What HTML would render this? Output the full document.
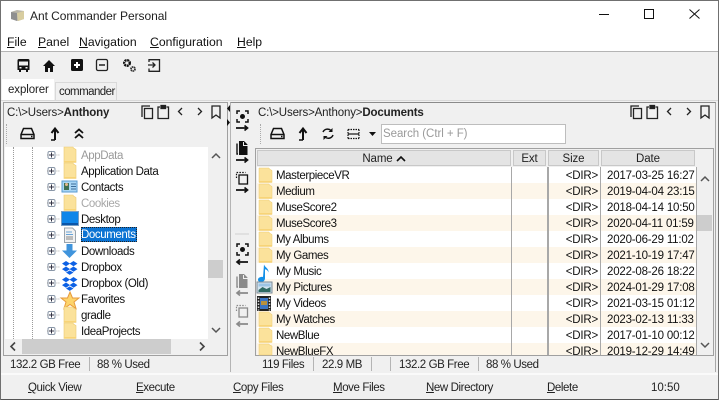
<!DOCTYPE html>
<html><head><meta charset="utf-8"><style>
html,body{margin:0;padding:0;width:719px;height:400px;overflow:hidden;background:#f0f0f0}
body{font:11.5px "Liberation Sans",sans-serif;letter-spacing:-.4px;color:#111;position:relative}
.a,.t{position:absolute}
.t{white-space:nowrap;line-height:18px}
u{text-decoration:underline}
.row{position:absolute;left:257px;width:439px;height:16px}
.c{position:absolute;top:0;line-height:18px;white-space:nowrap}
.d{letter-spacing:-.2px}
.h{position:absolute;top:150px;height:16px;background:#e4e4e4;border:1px solid #c8c8c8;box-sizing:border-box;text-align:center;line-height:16px;color:#222;letter-spacing:-.1px}
.vl{position:absolute;top:167px;height:188px;width:1px;background:#a8a8a8}
.p{letter-spacing:-.15px}
svg{position:absolute;overflow:visible}
</style></head><body>
<!-- window -->
<div class="a" style="left:0;top:0;width:719px;height:51px;background:#fff"></div>
<div class="a" style="left:0;top:51px;width:719px;height:1px;background:#b4b4b4"></div>
<div class="a" style="left:0;top:0;width:719px;height:1px;background:#707070"></div>
<svg style="left:10px;top:9px" width="15" height="13" viewBox="0 0 15 13"><path d="M1 3l6-2 7 1v8l-6 2-7-2z" fill="#b9b5a8"/><path d="M7 4l7-2v8l-6 2z" fill="#d8cda0"/><path d="M1 3l6 1v8l-6-2z" fill="#8f8f8f"/></svg>
<div class="t" style="left:30px;top:7px;font-size:12px;letter-spacing:-.05px;color:#222">Ant Commander Personal</div>
<svg style="left:599px;top:9px" width="110" height="14" fill="none" stroke="#111"><path d="M0 5.500H10" /><rect x="45.500" y=".5" width="9" height="9"/><path d="M90.500 .5l10 9M100.500 .5l-10 9"/></svg>
<div class="t" style="left:7px;top:33px;font-size:12.200px;letter-spacing:0"><u>F</u>ile</div>
<div class="t" style="left:38px;top:33px;font-size:12.200px;letter-spacing:0"><u>P</u>anel</div>
<div class="t" style="left:79px;top:33px;font-size:12.200px;letter-spacing:0"><u>N</u>avigation</div>
<div class="t" style="left:150px;top:33px;font-size:12.200px;letter-spacing:0"><u>C</u>onfiguration</div>
<div class="t" style="left:237px;top:33px;font-size:12.200px;letter-spacing:0"><u>H</u>elp</div>
<!-- toolbar -->
<svg style="left:17px;top:59px" width="150" height="14">
<path d="M2 0h9a1.500 1.500 0 0 1 1.500 1.500V11h-1.500v2H9v-2H4v2H2v-2H.5V1.500A1.500 1.500 0 0 1 2 0z" fill="#111"/><rect x="2" y="2.500" width="9" height="4" fill="#f0f0f0"/><rect x="2.500" y="8" width="2" height="1.500" fill="#f0f0f0"/><rect x="8.500" y="8" width="2" height="1.500" fill="#f0f0f0"/>
<path d="M26 7l6-6 6 6h-2v6h-3v-4h-2v4h-3V7z" fill="#111"/>
<rect x="54" y="0" width="12" height="12" rx="1.500" fill="#111"/><path d="M60 3v6M57 6h6" stroke="#fff" stroke-width="2"/>
<rect x="79.500" y=".5" width="11" height="11" rx="1.500" fill="none" stroke="#222" stroke-width="1.300"/><path d="M82 6h6" stroke="#222" stroke-width="1.500"/>
<circle cx="110" cy="4" r="2.800" fill="none" stroke="#111" stroke-width="2.400" stroke-dasharray="2 .6"/><circle cx="116" cy="10" r="2" fill="none" stroke="#333" stroke-width="1.800" stroke-dasharray="1.500 .5"/>
<path d="M132 3V.7h10.500v11.600H132V9.500" fill="none" stroke="#222" stroke-width="1.300"/><path d="M131 6h7M135.500 3.500L138 6l-2.500 2.500" fill="none" stroke="#222" stroke-width="1.300"/>
</svg>
<!-- tabs -->
<div class="a" style="left:55px;top:82px;width:62px;height:18px;background:#f0f0f0;border:1px solid #d9d9d9;border-bottom:0;box-sizing:border-box"></div>
<div class="a" style="left:2px;top:79px;width:52px;height:21px;background:#fff"></div>
<div class="t" style="left:8px;top:81px;color:#222;letter-spacing:-.1px">explorer</div>
<div class="t" style="left:59px;top:83px;color:#222;letter-spacing:-.55px">commander</div>
<div class="a" style="left:0;top:100px;width:719px;height:1px;background:#d8d8d8"></div>
<!-- left panel -->
<div class="a" style="left:3px;top:102px;width:223px;height:252px;border:1px solid #a0a0a0"></div>
<div class="t p" style="left:7px;top:104px;color:#222">C:\&gt;Users&gt;<b>Anthony</b></div>
<svg style="left:141px;top:105px" width="85" height="16" fill="none" stroke="#222" stroke-width="1.300">
<path d="M1 12V1h8"/><rect x="3.500" y="3.500" width="8" height="10"/>
<path d="M19 2h-2v11.500h10.500V2h-2"/><rect x="20" y=".5" width="4.500" height="3" fill="#222"/>
<path d="M41 3l-3.500 3.500L41 10M57 3l3.500 3.500L57 10"/>
<path d="M71 1h8v12l-4-3-4 3z"/>
</svg>
<div class="a" style="left:6px;top:124px;width:1px;height:20px;border-left:1px dotted #aaa"></div>
<svg style="left:20px;top:127px" width="70" height="14" fill="none" stroke="#111" stroke-width="1.500">
<path d="M1 7.500L3.500 1.500h8L14 7.500v4H1z"/><path d="M1 7.500h13"/><path d="M11 9.500h1.500"/>
<path d="M35 13V2.500M31.500 6L35 1.500 38.500 6" stroke-width="2"/><path d="M31 13h4" stroke-width="1.500"/>
<path d="M55 6l4-3.500L63 6M55 11l4-3.500L63 11" stroke-width="1.800"/>
</svg>
<!-- tree -->
<div class="a" style="left:5px;top:147px;width:203px;height:192px;background:#fff"></div>
<div class="a" style="left:13px;top:147px;height:192px;border-left:1px dotted #9a9a9a"></div>
<div class="a" style="left:32px;top:147px;height:192px;border-left:1px dotted #9a9a9a"></div>
<svg style="left:47px;top:147px" width="14" height="192">
<defs><g id="e"><rect x="1" y="1" width="7" height="7" rx="1.500" fill="none" stroke="#8a97a8"/><path d="M2 4.500h5M4.500 2v5" stroke="#334"/><path d="M0 4.500h1M9.500 4.500h.8M11.500 4.500h.8" stroke="#999"/></g></defs>
<use href="#e" y="3.500"/><use href="#e" y="19.500"/><use href="#e" y="35.500"/><use href="#e" y="51.500"/><use href="#e" y="67.500"/><use href="#e" y="83.500"/><use href="#e" y="99.500"/><use href="#e" y="115.500"/><use href="#e" y="131.500"/><use href="#e" y="147.500"/><use href="#e" y="163.500"/><use href="#e" y="179.500"/>
</svg>
<svg style="left:60px;top:147px" width="20" height="192">
<defs><g id="f"><path d="M4 0h9l.5 1 2.500 1.500V15.500H4z" fill="#fbe29b" stroke="#ecca70" stroke-width=".6"/><path d="M4 14h12v1.500H4z" fill="#f8d477"/></g></defs>
<use href="#f" y="0"/><use href="#f" y="16"/>
<rect x="2" y="34" width="15" height="11" fill="#a9d6f5" stroke="#5a9bd0"/><rect x="4" y="36" width="5" height="7" fill="#3f6e52"/><circle cx="6.500" cy="37.500" r="1.500" fill="#e7b98f"/><path d="M11 37h5M11 39.500h5M11 42h5" stroke="#3c6c99"/>
<use href="#f" y="48"/>
<rect x="2" y="65" width="16" height="13" fill="#0f86e9"/><rect x="2" y="76" width="16" height="2" fill="#0a55a8"/><rect x="1.500" y="64.500" width="17" height="14" fill="none" stroke="#1b5e9e" stroke-width=".6"/>
<path d="M4.500 81h8l3 3v11.500h-11z" fill="#f1f1f1" stroke="#9aa4ad"/><path d="M6 85h6M6 87.500h7" stroke="#66a3d8"/><path d="M6 90h7M6 92h7" stroke="#888"/>
<path d="M6.500 97h6v6.500H17L9.500 111 2 103.500h4.500z" fill="#3f94dc"/>
<g fill="#0d61e5" id="db"><path d="M6 114l-4 2.600 4 2.600 4-2.600zM13.500 114l-4 2.600 4 2.600 4-2.600zM6 119.500l-4 2.600 4 2.600 4-2.600zM13.500 119.500l-4 2.600 4 2.600 4-2.600zM9.700 123.500l-3.700 2 3.700 2.400 3.800-2.400z"/></g>
<use href="#db" y="16"/>
<path d="M10 145l2.500 6h6.500l-5 4 2 6.500-6-4-6 4 2-6.500-5-4h6.500z" fill="#fdd46b" stroke="#e79a3c"/>
<use href="#f" y="160" x="0"/><use href="#f" y="176"/>
</svg>
<div class="t" style="left:81px;top:147px;color:#9a9a9a">AppData</div>
<div class="t" style="left:81px;top:163px">Application Data</div>
<div class="t" style="left:81px;top:179px">Contacts</div>
<div class="t" style="left:81px;top:195px;color:#a8a8a8">Cookies</div>
<div class="t" style="left:81px;top:211px">Desktop</div>
<div class="a" style="left:81px;top:227px;width:56px;height:15px;background:#0b73d3;outline:1px dotted #222;outline-offset:-1px"></div>
<div class="t" style="left:81px;top:226px;color:#fff">Documents</div>
<div class="t" style="left:81px;top:243px">Downloads</div>
<div class="t" style="left:81px;top:259px">Dropbox</div>
<div class="t" style="left:81px;top:275px">Dropbox (Old)</div>
<div class="t" style="left:81px;top:291px">Favorites</div>
<div class="t" style="left:81px;top:307px">gradle</div>
<div class="t" style="left:81px;top:323px">IdeaProjects</div>
<!-- left scrollbars -->
<div class="a" style="left:208px;top:260px;width:15px;height:18px;background:#cdcdcd"></div>
<svg style="left:210px;top:150px" width="12" height="185" fill="none" stroke="#555" stroke-width="1.500"><path d="M2 8l4-4 4 4M2 178l4 4 4-4"/></svg>
<div class="a" style="left:22px;top:339px;width:149px;height:15px;background:#cdcdcd"></div>
<svg style="left:9px;top:340px" width="198" height="13" fill="none" stroke="#444" stroke-width="1.600"><path d="M6 2.500L2 6.500l4 4M191 2.500l4 4-4 4"/></svg>
<div class="t" style="left:10px;top:356px;color:#222">132.2 GB Free</div>
<div class="a" style="left:89px;top:357px;width:1px;height:14px;background:#b4b4b4"></div>
<div class="t" style="left:97px;top:356px;color:#222">88 % Used</div>
<!-- splitter marks -->
<svg style="left:227px;top:105px" width="3" height="30"><path d="M3 0v7L0 3.500zM0 14v7l3-3.500z" fill="#111"/></svg>
<!-- right panel -->
<div class="a" style="left:230px;top:102px;width:486px;height:270px;border-top:1px solid #8a8a8a;border-left:1px solid #b4b4b4;border-right:1px solid #a8a8a8;box-sizing:border-box"></div>
<div class="t p" style="left:258px;top:104px;color:#222">C:\&gt;Users&gt;Anthony&gt;<b>Documents</b></div>
<svg style="left:630px;top:105px" width="85" height="16" fill="none" stroke="#222" stroke-width="1.300">
<path d="M1 12V1h8"/><rect x="3.500" y="3.500" width="8" height="10"/>
<path d="M19 2h-2v11.500h10.500V2h-2"/><rect x="20" y=".5" width="4.500" height="3" fill="#222"/>
<path d="M41 3l-3.500 3.500L41 10M57 3l3.500 3.500L57 10"/>
<path d="M71 1h8v12l-4-3-4 3z"/>
</svg>
<!-- side buttons -->
<svg style="left:235px;top:109px" width="16" height="220" fill="none" stroke="#111" stroke-width="1.400">
<defs>
<g id="s1"><path d="M1 4V1h3M9 1h3v3M12 9v3H9M4 12H1V9" stroke-width="1.500"/><circle cx="6.500" cy="6.500" r="2.500" fill="#111" stroke="none"/></g>
<g id="s2"><path d="M3 0h5l3.500 3.500V14H3z" fill="#111" stroke="none"/><path d="M7.500 1v3.500h4" stroke="#f0f0f0" stroke-width="1"/><path d="M1 2.500v10.500h1" stroke="#111"/></g>
<g id="s3"><path d="M.5 6V.5h9" stroke-dasharray="1.500 1.300" stroke-width="1.200"/><rect x="3" y="3" width="8.500" height="9" stroke-width="1.300"/></g>
<path id="ar" d="M0 3h11M8.500 .5L11.500 3l-3 2.500" stroke-width="1.700"/>
<path id="al" d="M1 3h11M4 .5L1 3l3 2.500" stroke-width="1.700"/>
</defs>
<use href="#s1" x="1" y="1"/><use href="#ar" x="1" y="16"/>
<use href="#s2" x="1" y="32"/><use href="#ar" x="1" y="48"/>
<use href="#s3" x="1" y="63"/><use href="#ar" x="1" y="78"/>
<path d="M0 125h14" stroke="#d0d0d0" stroke-width="1"/>
<use href="#s1" x="1" y="134"/><use href="#al" x="1" y="150"/>
<g opacity=".45"><use href="#s2" x="1" y="165"/><use href="#al" x="1" y="181"/><use href="#s3" x="1" y="196"/><use href="#al" x="1" y="212"/></g>
</svg>
<div class="a" style="left:260px;top:124px;height:20px;border-left:1px dotted #aaa"></div>
<svg style="left:270px;top:127px" width="112" height="14" fill="none" stroke="#111" stroke-width="1.500">
<path d="M1 7.500L3.500 1.500h8L14 7.500v4H1z"/><path d="M1 7.500h13"/><path d="M11 9.500h1.500"/>
<path d="M33 13V2.500M29.500 6L33 1.500 36.500 6" stroke-width="2"/><path d="M29 13h4"/>
<path d="M53 5a5 5 0 0 1 8-1.500M63 8a5 5 0 0 1-8 2"/><path d="M62.500 1v4h-4zM53.500 13V9h4z" fill="#111" stroke="none"/>
<path d="M78 2.500h11M78 11.500h11M78 2.500v9M89 2.500v9" stroke-dasharray="1.500 1" stroke-width="1.200"/><path d="M78 7h11" stroke-width="1.200"/>
<path d="M99 5h7l-3.500 4z" fill="#111" stroke="none"/>
</svg>
<div class="a" style="left:381px;top:124px;width:185px;height:20px;background:#fff;border:1px solid #bdbdbd;box-sizing:border-box"></div>
<div class="t" style="left:383px;top:125px;color:#9a9a9a;letter-spacing:-.05px">Search (Ctrl + F)</div>
<!-- table -->
<div class="a" style="left:255px;top:148px;width:459px;height:208px;border:1px solid #a0a0a0;box-sizing:border-box"></div>
<div class="h" style="left:257px;width:254px">Name <svg style="position:static;vertical-align:0" width="10" height="7" fill="none" stroke="#111" stroke-width="1.600"><path d="M1 6l4-4 4 4"/></svg></div>
<div class="h" style="left:513px;width:33px">Ext</div>
<div class="h" style="left:548px;width:51px">Size</div>
<div class="h" style="left:601px;width:94px">Date</div>

<div class="row" style="top:167px;background:#fff"><span class="c" style="left:19px">MasterpieceVR</span><span class="c d" style="right:98px">&lt;DIR&gt;</span><span class="c d" style="left:350px">2017-03-25 16:27</span></div>
<div class="row" style="top:183px;background:#fdf6ea"><span class="c" style="left:19px">Medium</span><span class="c d" style="right:98px">&lt;DIR&gt;</span><span class="c d" style="left:350px">2019-04-04 23:15</span></div>
<div class="row" style="top:199px;background:#fff"><span class="c" style="left:19px">MuseScore2</span><span class="c d" style="right:98px">&lt;DIR&gt;</span><span class="c d" style="left:350px">2018-04-14 10:50</span></div>
<div class="row" style="top:215px;background:#fdf6ea"><span class="c" style="left:19px">MuseScore3</span><span class="c d" style="right:98px">&lt;DIR&gt;</span><span class="c d" style="left:350px">2020-04-11 01:59</span></div>
<div class="row" style="top:231px;background:#fff"><span class="c" style="left:19px">My Albums</span><span class="c d" style="right:98px">&lt;DIR&gt;</span><span class="c d" style="left:350px">2020-06-29 11:02</span></div>
<div class="row" style="top:247px;background:#fdf6ea"><span class="c" style="left:19px">My Games</span><span class="c d" style="right:98px">&lt;DIR&gt;</span><span class="c d" style="left:350px">2021-10-19 17:47</span></div>
<div class="row" style="top:263px;background:#fff"><span class="c" style="left:19px">My Music</span><span class="c d" style="right:98px">&lt;DIR&gt;</span><span class="c d" style="left:350px">2022-08-26 18:22</span></div>
<div class="row" style="top:279px;background:#fdf6ea"><span class="c" style="left:19px">My Pictures</span><span class="c d" style="right:98px">&lt;DIR&gt;</span><span class="c d" style="left:350px">2024-01-29 17:08</span></div>
<div class="row" style="top:295px;background:#fff"><span class="c" style="left:19px">My Videos</span><span class="c d" style="right:98px">&lt;DIR&gt;</span><span class="c d" style="left:350px">2021-03-15 01:12</span></div>
<div class="row" style="top:311px;background:#fdf6ea"><span class="c" style="left:19px">My Watches</span><span class="c d" style="right:98px">&lt;DIR&gt;</span><span class="c d" style="left:350px">2023-02-13 11:33</span></div>
<div class="row" style="top:327px;background:#fff"><span class="c" style="left:19px">NewBlue</span><span class="c d" style="right:98px">&lt;DIR&gt;</span><span class="c d" style="left:350px">2017-01-10 00:12</span></div>
<div class="row" style="top:343px;height:12px;overflow:hidden;background:#fdf6ea"><span class="c" style="left:19px">NewBlueFX</span><span class="c d" style="right:98px">&lt;DIR&gt;</span><span class="c d" style="left:350px">2019-12-29 14:49</span></div>
<div class="vl" style="left:511px"></div><div class="vl" style="left:547px;width:2px"></div><div class="vl" style="left:600px"></div><div class="vl" style="left:696px"></div>
<svg style="left:257px;top:167px" width="18" height="188" style="overflow:hidden">
<defs><g id="g"><path d="M2 0h10l.5 1 2.500 1.500V14.500H2z" fill="#fbe29b" stroke="#ecca70" stroke-width=".5"/><path d="M2 13h13v1.500H2z" fill="#f8d477"/></g></defs>
<use href="#g" x="0" y="1"/><use href="#g" y="17"/><use href="#g" y="33"/><use href="#g" y="49"/><use href="#g" y="65"/><use href="#g" y="81"/>
<path d="M7 97.500c1 3 5 4 4.500 8-.5-2-2-3-3.500-3.300v9c0 2.500-2 3.800-4 3.800s-3-1-3-2.300c0-2 2.500-3.200 5-2.700z" fill="#1490e8"/>
<rect x="0" y="115" width="15" height="11" fill="#d3e3ef" stroke="#7a8a96"/><path d="M1.500 123l4-3 4 2 4-2v5h-12z" fill="#2f6a63"/><rect x="1.500" y="116.500" width="12" height="3" fill="#9cc4e4"/>
<rect x="0" y="129" width="14" height="15" fill="#222"/><rect x="3" y="131" width="8" height="11" fill="#3b74c4"/><path d="M1.500 130.500v13M12.500 130.500v13" stroke="#ddd" stroke-dasharray="1.500 1.500" stroke-width="1.500"/><rect x="4" y="134" width="6" height="4" fill="#b9913e"/>
<use href="#g" y="145"/><use href="#g" y="161"/>
<path d="M2 177h10l.5 1 2.500 1V188H2z" fill="#fbe29b" stroke="#ecca70" stroke-width=".5"/>
</svg>
<!-- right scrollbar -->
<div class="a" style="left:697px;top:215px;width:15px;height:16px;background:#cdcdcd"></div>
<svg style="left:699px;top:170px" width="12" height="185" fill="none" stroke="#555" stroke-width="1.500"><path d="M2 11l4-4 4 4M2 173l4 4 4-4"/></svg>
<div class="t" style="left:262px;top:356px;color:#222">119 Files</div>
<div class="a" style="left:313px;top:357px;width:1px;height:14px;background:#b4b4b4"></div>
<div class="t" style="left:322px;top:356px;color:#222">22.9 MB</div>
<div class="a" style="left:371px;top:357px;width:1px;height:14px;background:#b4b4b4"></div>
<div class="a" style="left:390px;top:357px;width:1px;height:14px;background:#b4b4b4"></div>
<div class="t" style="left:399px;top:356px;color:#222">132.2 GB Free</div>
<div class="a" style="left:478px;top:357px;width:1px;height:14px;background:#b4b4b4"></div>
<div class="t" style="left:486px;top:356px;color:#222">88 % Used</div>
<!-- bottom -->
<div class="a" style="left:0;top:373px;width:719px;height:2px;background:#fafafa"></div>
<div class="t" style="left:28px;top:379px;color:#222"><u>Q</u>uick View</div>
<div class="t" style="left:136px;top:379px;color:#222"><u>E</u>xecute</div>
<div class="t" style="left:233px;top:379px;color:#222"><u>C</u>opy Files</div>
<div class="t" style="left:333px;top:379px;color:#222"><u>M</u>ove Files</div>
<div class="t" style="left:426px;top:379px;color:#222"><u>N</u>ew Directory</div>
<div class="t" style="left:547px;top:379px;color:#222"><u>D</u>elete</div>
<div class="t" style="left:651px;top:379px;color:#222;letter-spacing:0">10:50</div>
<div class="a" style="left:0;top:399px;width:719px;height:1px;background:#555"></div>
<div class="a" style="left:0;top:0;width:1px;height:400px;background:#707070"></div>
<div class="a" style="left:718px;top:0;width:1px;height:400px;background:#707070"></div>
</body></html>
